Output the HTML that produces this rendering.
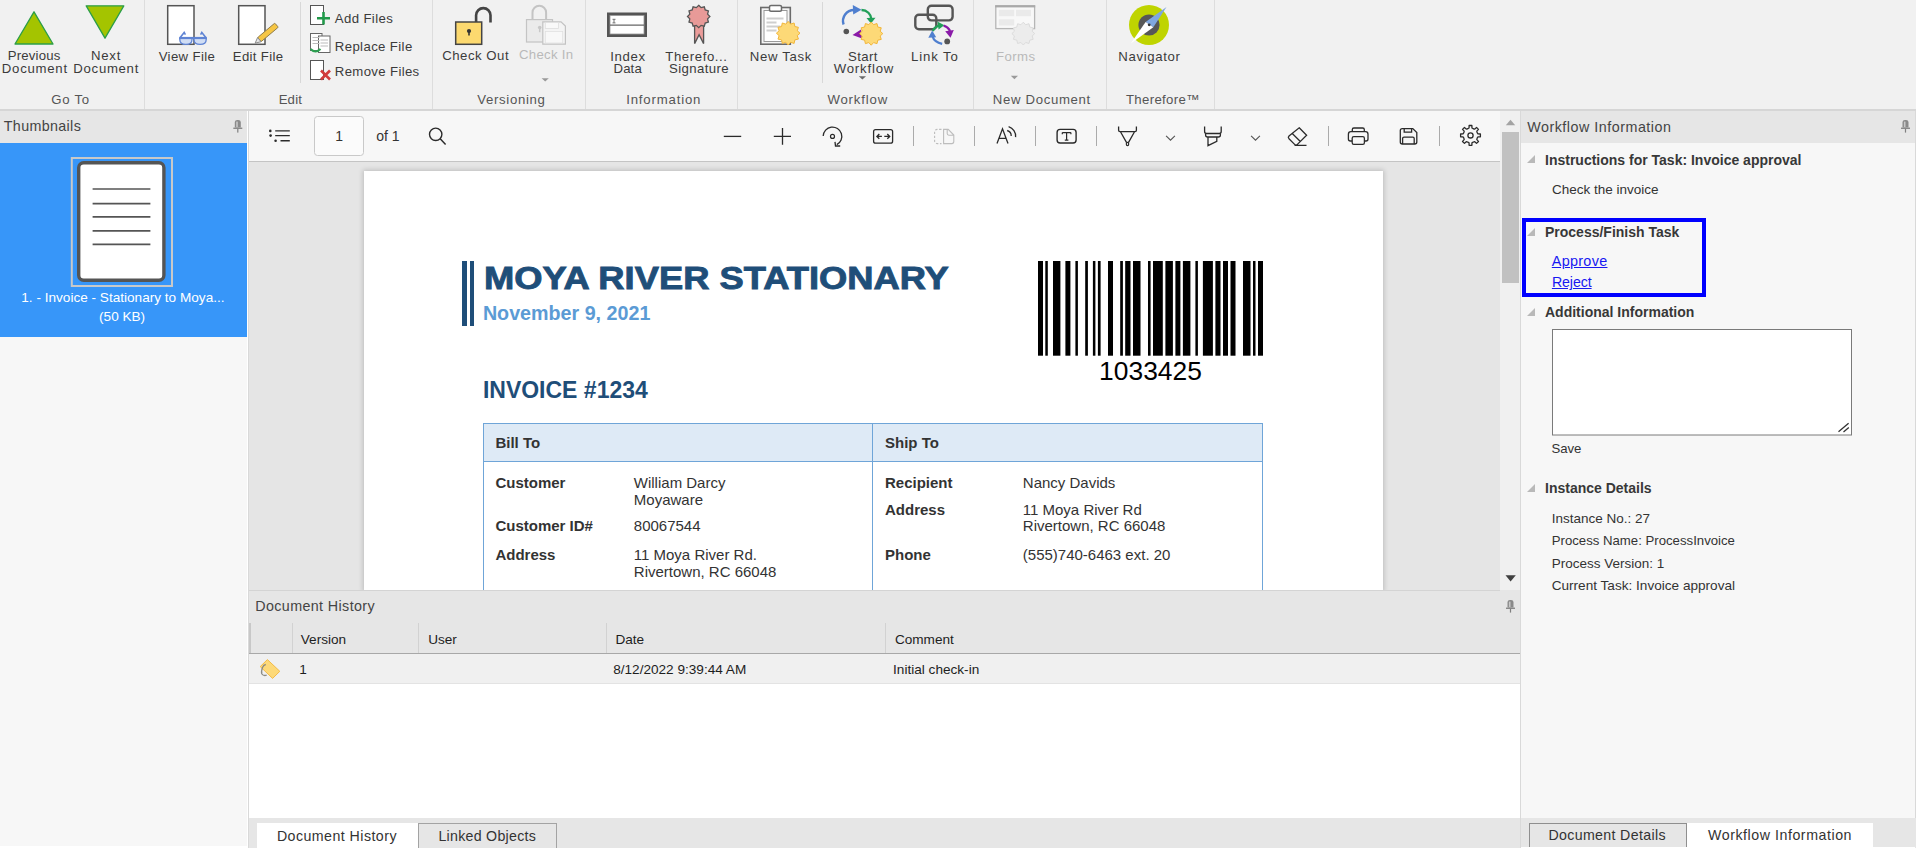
<!DOCTYPE html>
<html><head><meta charset="utf-8"><title>Therefore Viewer</title>
<style>
html,body{margin:0;padding:0;}
body{width:1916px;height:848px;overflow:hidden;position:relative;background:#f0f0f0;font-family:"Liberation Sans",sans-serif;}
.t{position:absolute;line-height:1;white-space:nowrap;}
.r{position:absolute;display:block;}
</style></head><body>
<div class="r" style="left:0px;top:0px;width:1916px;height:109px;background:#f1f1f1;"></div>
<div class="r" style="left:0px;top:109px;width:1916px;height:2px;background:#d6d6d6;"></div>
<div class="r" style="left:0px;top:111px;width:247px;height:737px;background:#f7f7f7;"></div>
<div class="r" style="left:0px;top:111px;width:247px;height:32px;background:#e6e6e6;"></div>
<div class="r" style="left:0px;top:143px;width:247px;height:194px;background:#3796f9;"></div>
<div class="r" style="left:247px;top:111px;width:1px;height:737px;background:#ffffff;"></div>
<div class="r" style="left:248px;top:111px;width:1px;height:737px;background:#d9d9d9;"></div>
<div class="r" style="left:249px;top:111px;width:1251px;height:50px;background:#f7f7f7;"></div>
<div class="r" style="left:249px;top:161px;width:1251px;height:1px;background:#c4c4c4;"></div>
<div class="r" style="left:249px;top:162px;width:1251px;height:428px;background:#e5e5e5;"></div>
<div class="r" style="left:1500px;top:111px;width:20px;height:479px;background:#f0f0f0;"></div>
<div class="r" style="left:1502px;top:132px;width:17px;height:151px;background:#c1c1c1;"></div>
<div class="r" style="left:1520px;top:111px;width:1px;height:737px;background:#d9d9d9;"></div>
<div class="r" style="left:1521px;top:111px;width:395px;height:707px;background:#f7f7f7;"></div>
<div class="r" style="left:1521px;top:111px;width:395px;height:32px;background:#e6e6e6;"></div>
<div class="r" style="left:1915px;top:111px;width:1px;height:737px;background:#d9d9d9;"></div>
<div class="r" style="left:1521px;top:818px;width:395px;height:30px;background:#e6e6e6;"></div>
<div class="r" style="left:249px;top:590px;width:1271px;height:258px;background:#ffffff;"></div>
<div class="r" style="left:249px;top:590px;width:1271px;height:63px;background:#e6e6e6;"></div>
<div class="r" style="left:249px;top:653px;width:1271px;height:1px;background:#a8a8a8;"></div>
<div class="r" style="left:249px;top:654px;width:1271px;height:29px;background:#f0f0f0;"></div>
<div class="r" style="left:249px;top:683px;width:1271px;height:1px;background:#e3e3e3;"></div>
<div class="r" style="left:249px;top:818px;width:1271px;height:30px;background:#e6e6e6;"></div>
<div class="r" style="left:144px;top:0px;width:1px;height:109px;background:#dddddd;"></div>
<div class="r" style="left:432px;top:0px;width:1px;height:109px;background:#dddddd;"></div>
<div class="r" style="left:585px;top:0px;width:1px;height:109px;background:#dddddd;"></div>
<div class="r" style="left:737px;top:0px;width:1px;height:109px;background:#dddddd;"></div>
<div class="r" style="left:973px;top:0px;width:1px;height:109px;background:#dddddd;"></div>
<div class="r" style="left:1106px;top:0px;width:1px;height:109px;background:#dddddd;"></div>
<div class="r" style="left:1214px;top:0px;width:1px;height:109px;background:#dddddd;"></div>
<div class="r" style="left:300px;top:2px;width:1px;height:81px;background:#d8d8d8;"></div>
<div class="r" style="left:822px;top:2px;width:1px;height:81px;background:#d8d8d8;"></div>
<svg class="r" style="left:0px;top:0px;" width="1916" height="109" viewBox="0 0 1916 109"><polygon points="15,44 53,44 34,11.8" fill="#a4c400" stroke="#2b9e48" stroke-width="1.3" stroke-linejoin="round"/><polygon points="86.2,5.8 123.8,5.8 105,38.2" fill="#a4c400" stroke="#2b9e48" stroke-width="1.3" stroke-linejoin="round"/><rect x="167.7" y="5.7" width="26.3" height="38.6" fill="#fff" stroke="#555" stroke-width="1.5"/><g fill="#d0ddf4" stroke="#5f84d4" stroke-width="1.3"><path d="M179.8,38.2 h12.2 v1.2 q0,5 -6.1,5 q-6.1,0 -6.1,-5z"/><path d="M194,38.2 h12.2 v1.2 q0,5 -6.1,5 q-6.1,0 -6.1,-5z"/></g><path d="M179.2,38 H206.8" stroke="#5f84d4" stroke-width="2.2"/><path d="M180.2,37.6 L184.2,32.4 L185.4,34.6 M205.8,37.6 L201.8,32.4 L200.6,34.6" fill="none" stroke="#5f84d4" stroke-width="1.6"/><rect x="238.7" y="5.7" width="26.3" height="38.6" fill="#fff" stroke="#555" stroke-width="1.5"/><g transform="translate(267,33.2) rotate(-40)"><rect x="-10" y="-2.7" width="22.5" height="5.4" rx="0.8" fill="#f6c644" stroke="#8c7a4a" stroke-width="0.9"/><polygon points="-10,-2.7 -15.5,0 -10,2.7" fill="#e6e6e6" stroke="#888" stroke-width="0.9"/></g><rect x="310.5" y="5.5" width="13" height="19" fill="#fff" stroke="#555" stroke-width="1"/><path d="M317,18.2 h13 M323.5,12 v12.5" stroke="#21994a" stroke-width="2.6"/><rect x="310.5" y="33.5" width="11.5" height="17" fill="#fff" stroke="#666" stroke-width="1"/><rect x="318.5" y="36" width="11.5" height="16.5" fill="#fff" stroke="#666" stroke-width="1"/><path d="M312.5,37.5h7 M312.5,40.5h7 M312.5,43.5h7 M320.5,40h7.5 M320.5,43h7.5 M320.5,46h7.5" stroke="#bbb" stroke-width="1.2"/><path d="M310.5,49 q5,5 10,0" fill="none" stroke="#2aa050" stroke-width="2"/><rect x="310.5" y="60.5" width="13" height="19" fill="#fff" stroke="#555" stroke-width="1"/><path d="M321,70.5 l9,9 M330,70.5 l-9,9" stroke="#d23a3a" stroke-width="2.6"/><path d="M476.1,22.5 V15.3 a7.2,7.2 0 0 1 14.4,0 V22.5" fill="none" stroke="#444" stroke-width="2.6"/><rect x="455.7" y="22" width="26" height="22.3" fill="#fcd96f" stroke="#444" stroke-width="1.5"/><circle cx="469" cy="31" r="2.1" fill="#333"/><path d="M469,31 v4.5" stroke="#333" stroke-width="1.6"/><path d="M532.5,19.8 V12.6 a6.8,6.8 0 0 1 13.6,0 V19.8" fill="none" stroke="#c4c4c4" stroke-width="2"/><rect x="526.5" y="19.6" width="26" height="22.4" fill="#ebebeb" stroke="#c4c4c4" stroke-width="1.2"/><circle cx="539.7" cy="27.6" r="1.8" fill="#c8c8c8"/><path d="M539.7,27.6 v4.6" stroke="#c8c8c8" stroke-width="1.5"/><path d="M542.8,21.8 h18.2 l4.4,4.2 v18.2 h-22.6z" fill="#f4f4f4" stroke="#c2c2c2" stroke-width="1.2"/><rect x="545.3" y="22.6" width="13.3" height="5.8" fill="#f9f9f9" stroke="#dedede" stroke-width="0.8"/><rect x="545.3" y="31.5" width="17.4" height="11.5" fill="#f8f8f8" stroke="#e0e0e0" stroke-width="0.8"/><polygon points="541.6,78.2 548.8000000000001,78.2 545.2,81.60000000000001" fill="#9a9a9a"/><polygon points="858.8,76.2 866.0,76.2 862.4,79.60000000000001" fill="#6a6a6a"/><polygon points="1010.8,75.8 1018.0,75.8 1014.4,79.2" fill="#9a9a9a"/><rect x="608.5" y="14" width="37" height="21.5" fill="#fff" stroke="#555" stroke-width="3"/><rect x="610" y="15.5" width="34" height="18.5" fill="none" stroke="#999" stroke-width="0.8"/><path d="M610,25.2 h34" stroke="#666" stroke-width="1.3"/><path d="M612.5,19.3h3 M614,19.3v3.6 M612.5,22.9h3" stroke="#666" stroke-width="0.9"/><path d="M694.6,24 v19.6 l4.5,-9 l4.5,9 v-19.6z" fill="#eb9c9a" stroke="#555" stroke-width="1.3" stroke-linejoin="miter"/><polygon points="698.70,5.30 701.08,7.61 704.30,6.80 705.21,9.99 708.40,10.90 707.59,14.12 709.90,16.50 707.59,18.88 708.40,22.10 705.21,23.01 704.30,26.20 701.08,25.39 698.70,27.70 696.32,25.39 693.10,26.20 692.19,23.01 689.00,22.10 689.81,18.88 687.50,16.50 689.81,14.12 689.00,10.90 692.19,9.99 693.10,6.80 696.32,7.61" fill="#e89a98" stroke="#555" stroke-width="1.3"/><rect x="760.8" y="7.5" width="29.5" height="36.7" fill="#f4f4f4" stroke="#6b6b6b" stroke-width="1.6"/><rect x="764" y="10.5" width="23" height="31" fill="#fff" stroke="#9a9a9a" stroke-width="1"/><rect x="769.5" y="5.6" width="12" height="5.6" rx="1.5" fill="#fff" stroke="#6b6b6b" stroke-width="1.5"/><path d="M766.5,18.5h17 M766.5,22.5h10 M766.5,26.5h14 M766.5,30.5h10" stroke="#cfcfcf" stroke-width="1.8"/><polygon points="788.20,21.40 790.63,24.12 794.10,22.98 794.85,26.55 798.42,27.30 797.28,30.77 800.00,33.20 797.28,35.63 798.42,39.10 794.85,39.85 794.10,43.42 790.63,42.28 788.20,45.00 785.77,42.28 782.30,43.42 781.55,39.85 777.98,39.10 779.12,35.63 776.40,33.20 779.12,30.77 777.98,27.30 781.55,26.55 782.30,22.98 785.77,24.12" fill="#fdd977" stroke="#f2b63a" stroke-width="1"/><path d="M843.6,24.5 a11,11 0 0 1 10.5,-14.5" fill="none" stroke="#4f7fcf" stroke-width="2.4"/><polygon points="852.8,5 861.5,9.8 853.2,14.5" fill="#4f7fcf"/><path d="M861.5,10 a10,10 0 0 1 10,9.5" fill="none" stroke="#22a058" stroke-width="2.4"/><polygon points="866.5,18 875.5,17.8 871,23.5" fill="#22a058"/><circle cx="846.3" cy="31.5" r="2.8" fill="#555"/><polygon points="852.5,35 861,29.5 862,38.5" fill="#8a1aa8"/><polygon points="871.20,22.00 873.61,24.62 877.00,23.55 877.78,27.02 881.25,27.80 880.18,31.19 882.80,33.60 880.18,36.01 881.25,39.40 877.78,40.18 877.00,43.65 873.61,42.58 871.20,45.20 868.79,42.58 865.40,43.65 864.62,40.18 861.15,39.40 862.22,36.01 859.60,33.60 862.22,31.19 861.15,27.80 864.62,27.02 865.40,23.55 868.79,24.62" fill="#fdd977" stroke="#f2b63a" stroke-width="1"/><rect x="915.3" y="14.7" width="21" height="14.6" rx="3.6" fill="none" stroke="#555" stroke-width="2.4"/><rect x="927.8" y="5.8" width="24.8" height="14.6" rx="3.6" fill="none" stroke="#555" stroke-width="2.4"/><path d="M932.8,31 q2,-4.5 7,-5.6" fill="none" stroke="#22a058" stroke-width="2.3"/><polygon points="937.4,21.6 944.3,25.2 938.6,29.6" fill="#22a058"/><path d="M943.6,25.6 q4.5,1.2 6.5,5.5" fill="none" stroke="#8a1aa8" stroke-width="2.3"/><polygon points="945.2,31.2 953.8,30 950.5,37.8" fill="#8a1aa8"/><path d="M932.6,36.5 q1.6,5.6 9.6,7.3" fill="none" stroke="#4f7fcf" stroke-width="2.3"/><polygon points="928.3,37.8 936.2,37.2 932.2,30.6" fill="#4f7fcf"/><circle cx="947.2" cy="41.4" r="2.9" fill="#555"/><rect x="995.8" y="6" width="38.8" height="22.6" fill="#f8f8f8" stroke="#b6b6b6" stroke-width="1.3"/><rect x="995.2" y="5.2" width="40" height="2.2" fill="#a9a9a9"/><path d="M998.8,9.7h15.4v6.5h-15.4z M1016,9.7h15v6.5h-15z M998.8,19.2h15.4v6.4h-15.4z" fill="#eaeaea"/><polygon points="1023.30,22.20 1025.68,24.71 1029.00,23.73 1029.81,27.09 1033.17,27.90 1032.19,31.22 1034.70,33.60 1032.19,35.98 1033.17,39.30 1029.81,40.11 1029.00,43.47 1025.68,42.49 1023.30,45.00 1020.92,42.49 1017.60,43.47 1016.79,40.11 1013.43,39.30 1014.41,35.98 1011.90,33.60 1014.41,31.22 1013.43,27.90 1016.79,27.09 1017.60,23.73 1020.92,24.71" fill="#ececec" stroke="#dcdcdc" stroke-width="1"/><circle cx="1149" cy="25" r="20" fill="#bfd400"/><circle cx="1149" cy="25" r="10.6" fill="#575757"/><polygon points="1166.5,7 1145.6,21.9 1153.3,27.2" fill="#7fa7e0"/><polygon points="1130.8,43.4 1145.6,21.9 1153.3,27.2" fill="#ffffff"/><circle cx="1149.2" cy="24.8" r="1.4" fill="#333"/></svg>
<div class="t" style="left:-266.1px;width:600px;text-align:center;top:48.8px;font-size:13.2px;color:#3b3b3b;font-weight:normal;letter-spacing:0.206px;padding-left:0.206px;">Previous</div>
<div class="t" style="left:-265.9px;width:600px;text-align:center;top:62.4px;font-size:13.2px;color:#3b3b3b;font-weight:normal;letter-spacing:0.734px;padding-left:0.734px;">Document</div>
<div class="t" style="left:-194.7px;width:600px;text-align:center;top:48.8px;font-size:13.2px;color:#3b3b3b;font-weight:normal;letter-spacing:0.753px;padding-left:0.753px;">Next</div>
<div class="t" style="left:-194.5px;width:600px;text-align:center;top:62.4px;font-size:13.2px;color:#3b3b3b;font-weight:normal;letter-spacing:0.691px;padding-left:0.691px;">Document</div>
<div class="t" style="left:-113.4px;width:600px;text-align:center;top:49.5px;font-size:13.2px;color:#3b3b3b;font-weight:normal;letter-spacing:0.374px;padding-left:0.374px;">View File</div>
<div class="t" style="left:-42.2px;width:600px;text-align:center;top:49.5px;font-size:13.2px;color:#3b3b3b;font-weight:normal;letter-spacing:0.327px;padding-left:0.327px;">Edit File</div>
<div class="t" style="left:175.2px;width:600px;text-align:center;top:49.2px;font-size:13.2px;color:#3b3b3b;font-weight:normal;letter-spacing:0.505px;padding-left:0.505px;">Check Out</div>
<div class="t" style="left:245.9px;width:600px;text-align:center;top:47.6px;font-size:13.2px;color:#b9b9b9;font-weight:normal;letter-spacing:0.301px;padding-left:0.301px;">Check In</div>
<div class="t" style="left:327.4px;width:600px;text-align:center;top:49.5px;font-size:13.2px;color:#3b3b3b;font-weight:normal;letter-spacing:0.602px;padding-left:0.602px;">Index</div>
<div class="t" style="left:327.6px;width:600px;text-align:center;top:62.4px;font-size:13.2px;color:#3b3b3b;font-weight:normal;letter-spacing:0.106px;padding-left:0.106px;">Data</div>
<div class="t" style="left:395.9px;width:600px;text-align:center;top:49.5px;font-size:13.2px;color:#3b3b3b;font-weight:normal;letter-spacing:0.578px;padding-left:0.578px;">Therefo...</div>
<div class="t" style="left:398.6px;width:600px;text-align:center;top:62.4px;font-size:13.2px;color:#3b3b3b;font-weight:normal;letter-spacing:0.399px;padding-left:0.399px;">Signature</div>
<div class="t" style="left:480.2px;width:600px;text-align:center;top:49.5px;font-size:13.2px;color:#3b3b3b;font-weight:normal;letter-spacing:0.646px;padding-left:0.646px;">New Task</div>
<div class="t" style="left:562.6px;width:600px;text-align:center;top:49.5px;font-size:13.2px;color:#3b3b3b;font-weight:normal;letter-spacing:0.356px;padding-left:0.356px;">Start</div>
<div class="t" style="left:563.1px;width:600px;text-align:center;top:62.4px;font-size:13.2px;color:#3b3b3b;font-weight:normal;letter-spacing:0.810px;padding-left:0.810px;">Workflow</div>
<div class="t" style="left:634.0px;width:600px;text-align:center;top:49.5px;font-size:13.2px;color:#3b3b3b;font-weight:normal;letter-spacing:0.852px;padding-left:0.852px;">Link To</div>
<div class="t" style="left:715.4px;width:600px;text-align:center;top:49.5px;font-size:13.2px;color:#b9b9b9;font-weight:normal;letter-spacing:0.426px;padding-left:0.426px;">Forms</div>
<div class="t" style="left:848.8px;width:600px;text-align:center;top:49.5px;font-size:13.2px;color:#3b3b3b;font-weight:normal;letter-spacing:0.638px;padding-left:0.638px;">Navigator</div>
<div class="t" style="left:334.8px;top:11.7px;font-size:13.2px;color:#3b3b3b;font-weight:normal;letter-spacing:0.372px;">Add Files</div>
<div class="t" style="left:334.8px;top:39.9px;font-size:13.2px;color:#3b3b3b;font-weight:normal;letter-spacing:0.376px;">Replace File</div>
<div class="t" style="left:334.8px;top:65.1px;font-size:13.2px;color:#3b3b3b;font-weight:normal;letter-spacing:0.346px;">Remove Files</div>
<div class="t" style="left:-230.2px;width:600px;text-align:center;top:92.9px;font-size:13.2px;color:#555555;font-weight:normal;letter-spacing:0.755px;padding-left:0.755px;">Go To</div>
<div class="t" style="left:-9.8px;width:600px;text-align:center;top:92.9px;font-size:13.2px;color:#555555;font-weight:normal;letter-spacing:0.185px;padding-left:0.185px;">Edit</div>
<div class="t" style="left:210.7px;width:600px;text-align:center;top:92.9px;font-size:13.2px;color:#555555;font-weight:normal;letter-spacing:0.684px;padding-left:0.684px;">Versioning</div>
<div class="t" style="left:362.9px;width:600px;text-align:center;top:92.9px;font-size:13.2px;color:#555555;font-weight:normal;letter-spacing:0.827px;padding-left:0.827px;">Information</div>
<div class="t" style="left:556.9px;width:600px;text-align:center;top:92.9px;font-size:13.2px;color:#555555;font-weight:normal;letter-spacing:0.824px;padding-left:0.824px;">Workflow</div>
<div class="t" style="left:741.2px;width:600px;text-align:center;top:92.9px;font-size:13.2px;color:#555555;font-weight:normal;letter-spacing:0.669px;padding-left:0.669px;">New Document</div>
<div class="t" style="left:862.5px;width:600px;text-align:center;top:92.9px;font-size:13.2px;color:#555555;font-weight:normal;letter-spacing:0.341px;padding-left:0.341px;">Therefore™</div>
<svg class="r" style="left:0px;top:0px;pointer-events:none;z-index:5" width="1916" height="848" viewBox="0 0 1916 848"><g fill="#2b2b2b"><circle cx="270.3" cy="130.9" r="1.3"/><circle cx="270.6" cy="135.6" r="1.3"/><circle cx="275.6" cy="140.7" r="1.3"/></g><path d="M275.2,130.9h14.6 M275.2,135.6h14.6 M280.5,140.7h9.3" stroke="#2b2b2b" stroke-width="1.4"/><rect x="314.5" y="116.5" width="49" height="39" rx="3" fill="#fbfbfb" stroke="#c9c9c9" stroke-width="1"/><circle cx="435.7" cy="134.3" r="6.2" fill="none" stroke="#2b2b2b" stroke-width="1.4"/><path d="M440.2,138.8 L445.6,144.4" stroke="#2b2b2b" stroke-width="1.5"/><path d="M913.5,126 V146" stroke="#ababab" stroke-width="1"/><path d="M974.5,126 V146" stroke="#ababab" stroke-width="1"/><path d="M1035.5,126 V146" stroke="#ababab" stroke-width="1"/><path d="M1096.5,126 V146" stroke="#ababab" stroke-width="1"/><path d="M1328.5,126 V146" stroke="#ababab" stroke-width="1"/><path d="M1439.5,126 V146" stroke="#ababab" stroke-width="1"/><path d="M723.8,136.4h17.4" stroke="#2b2b2b" stroke-width="1.3"/><path d="M773.8,136.4h17.2 M782.5,128v16.7" stroke="#2b2b2b" stroke-width="1.3"/><path d="M823.2,136 A9.3,9.3 0 1 1 836.8,144.6" fill="none" stroke="#2b2b2b" stroke-width="1.3"/><path d="M835,141.8 L835.5,146 L840.2,146" fill="none" stroke="#2b2b2b" stroke-width="1.3"/><circle cx="832.5" cy="136.4" r="2" fill="none" stroke="#2b2b2b" stroke-width="1.2"/><rect x="873.6" y="129.6" width="19" height="13.6" rx="2" fill="none" stroke="#2b2b2b" stroke-width="1.3"/><path d="M876.9,136.4h5 M884.3,136.4h5.2 M879.3,134 l-2.4,2.4 l2.4,2.4 M887.3,134 l2.4,2.4 l-2.4,2.4" fill="none" stroke="#2b2b2b" stroke-width="1.35"/><path d="M941.5,129.4 h-4.3 a2.6,2.6 0 0 0 -2.6,2.6 v9 a2.6,2.6 0 0 0 2.6,2.6 h4.3" fill="none" stroke="#bdbdbd" stroke-width="1.1" stroke-dasharray="2.4,1.6"/><path d="M943.6,143.6 V129.4 h4.6 l5.6,5.6 v6.6 a2,2 0 0 1 -2,2z M947.2,129.4 v4.2 a1.6,1.6 0 0 0 1.6,1.6 h5" fill="none" stroke="#bdbdbd" stroke-width="1.1"/><path d="M997,143.6 L1002.5,128.8 L1008,143.6 M999,138.4h7" fill="none" stroke="#2b2b2b" stroke-width="1.3"/><path d="M1008.6,126.6 a10,10 0 0 1 7,10.5 M1007.2,130.5 a5.5,5.5 0 0 1 4,5.5" fill="none" stroke="#2b2b2b" stroke-width="1.3"/><rect x="1057.1" y="129.4" width="19" height="13.6" rx="3" fill="none" stroke="#2b2b2b" stroke-width="1.4"/><path d="M1062.3,132.6 h8.6 M1062.3,132.6 v1.6 M1070.9,132.6 v1.6 M1066.6,132.6 v7.6 M1064.8,140.2 h3.6" fill="none" stroke="#2b2b2b" stroke-width="1.2"/><path d="M1118.6,126.6 v3.6 a1.4,1.4 0 0 0 1.4,1.4 h15 a1.4,1.4 0 0 0 1.4,-1.4 v-3.6 M1120.6,132 L1126.6,142.6 M1134.4,132 L1128.4,142.6" fill="none" stroke="#2b2b2b" stroke-width="1.3"/><ellipse cx="1127.5" cy="144" rx="1.2" ry="1.6" fill="none" stroke="#2b2b2b" stroke-width="1.2"/><path d="M1166.1,135.8 L1170.5,140.2 L1174.9,135.8" fill="none" stroke="#555" stroke-width="1.1"/><path d="M1251.1,135.8 L1255.5,140.2 L1259.9,135.8" fill="none" stroke="#555" stroke-width="1.1"/><path d="M1204.6,126.5 v5 a2,2 0 0 0 2,2 h12.6 a2,2 0 0 0 2,-2 v-5" fill="none" stroke="#2b2b2b" stroke-width="1.3"/><path d="M1205.6,133.4 v1.6 a2,2 0 0 0 2,2 h10.8 a2,2 0 0 0 2,-2 v-1.6 M1208,137.2 v8.4 l8.8,-4.2 v-4.2" fill="none" stroke="#2b2b2b" stroke-width="1.3"/><path d="M1299.2,127.8 L1306.6,135.2 L1297.4,144.4 a2,2 0 0 1 -2.8,0 L1289,138.8 a2,2 0 0 1 0,-2.8z M1292.5,133.8 L1300.6,141.8 M1294.5,145.4 h12" fill="none" stroke="#2b2b2b" stroke-width="1.3"/><path d="M1352.3,132 v-2.4 a1.6,1.6 0 0 1 1.6,-1.6 h8.8 a1.6,1.6 0 0 1 1.6,1.6 v2.4" fill="none" stroke="#2b2b2b" stroke-width="1.3"/><path d="M1352,141 h-1.6 a2,2 0 0 1 -2,-2 v-4.8 a2.5,2.5 0 0 1 2.5,-2.5 h14.6 a2.5,2.5 0 0 1 2.5,2.5 v4.8 a2,2 0 0 1 -2,2 h-1.6" fill="none" stroke="#2b2b2b" stroke-width="1.3"/><rect x="1352.2" y="136.6" width="12.2" height="7.8" rx="1.6" fill="none" stroke="#2b2b2b" stroke-width="1.3"/><path d="M1402.3,128.6 h10.5 l4,4 v9.4 a2,2 0 0 1 -2,2 h-12.5 a2,2 0 0 1 -2,-2 v-11.4 a2,2 0 0 1 2,-2z" fill="none" stroke="#2b2b2b" stroke-width="1.3"/><path d="M1404.2,128.6 v3.6 h7.4 v-3.6 M1402.6,144 v-5.4 a1.4,1.4 0 0 1 1.4,-1.4 h8.8 a1.4,1.4 0 0 1 1.4,1.4 v5.4" fill="none" stroke="#2b2b2b" stroke-width="1.3"/><polygon points="1467.74,128.75 1469.05,127.94 1469.11,125.50 1471.89,125.50 1471.95,127.94 1473.26,128.75 1474.75,129.10 1476.52,127.41 1478.49,129.38 1476.80,131.15 1477.15,132.64 1477.96,133.95 1480.40,134.01 1480.40,136.79 1477.96,136.85 1477.15,138.16 1476.80,139.65 1478.49,141.42 1476.52,143.39 1474.75,141.70 1473.26,142.05 1471.95,142.86 1471.89,145.30 1469.11,145.30 1469.05,142.86 1467.74,142.05 1466.25,141.70 1464.48,143.39 1462.51,141.42 1464.20,139.65 1463.85,138.16 1463.04,136.85 1460.60,136.79 1460.60,134.01 1463.04,133.95 1463.85,132.64 1464.20,131.15 1462.51,129.38 1464.48,127.41 1466.25,129.10" fill="none" stroke="#2b2b2b" stroke-width="1.3" stroke-linejoin="round"/><circle cx="1470.5" cy="135.4" r="2.6" fill="none" stroke="#2b2b2b" stroke-width="1.3"/><polygon points="1505.8,125.2 1515.2,125.2 1510.5,119.8" fill="#a3a3a3"/><polygon points="1505.5,575.2 1515.8,575.2 1510.6,581.4" fill="#404040"/></svg>
<div class="t" style="left:335.2px;top:129.2px;font-size:14px;color:#333;font-weight:normal;z-index:6;">1</div>
<div class="t" style="left:376.2px;top:129.1px;font-size:14px;color:#333;font-weight:normal;">of 1</div>
<div class="t" style="left:3.8px;top:118.7px;font-size:14.3px;color:#444;font-weight:normal;letter-spacing:0.342px;">Thumbnails</div>
<svg class="r" style="left:0px;top:0px;" width="250" height="848" viewBox="0 0 250 848"><path d="M234.8,127.6 V122 a2.5,2.2 0 0 1 2.5,-2 h1 a2.5,2.2 0 0 1 2.5,2 V127.6z" fill="#8a8a8a"/><rect x="236.20000000000002" y="121.6" width="1.6" height="5.4" fill="#c8c8c8"/><rect x="233.3" y="127.6" width="9" height="1.3" fill="#808080"/><rect x="237.20000000000002" y="128.9" width="1.2" height="3.7" fill="#808080"/><rect x="71.8" y="158" width="100.2" height="128" fill="none" stroke="#c9c9c9" stroke-width="2"/><rect x="78.7" y="162.7" width="85.2" height="117.6" rx="5" fill="#fff" stroke="#555" stroke-width="3.4"/><path d="M92.6,189h57.8 M92.6,203.6h57.8 M92.6,216.9h57.8 M92.6,230.9h57.8 M92.6,244.4h57.8" stroke="#555" stroke-width="1.6"/></svg>
<div class="t" style="left:-177.1px;width:600px;text-align:center;top:290.5px;font-size:13.6px;color:#ffffff;font-weight:normal;">1. - Invoice - Stationary to Moya...</div>
<div class="t" style="left:-177.9px;width:600px;text-align:center;top:309.9px;font-size:13.6px;color:#ffffff;font-weight:normal;">(50 KB)</div>
<div class="r" style="left:364px;top:170.6px;width:1019px;height:420px;background:#ffffff;box-shadow:0 0 5px 1px rgba(0,0,0,0.18);"></div>
<div class="r" style="left:462px;top:260.5px;width:4.6px;height:65.5px;background:#1f4e79;"></div>
<div class="r" style="left:469.5px;top:260.5px;width:4.6px;height:65.5px;background:#1f4e79;"></div>
<div class="t" style="left:483.8px;top:261.8px;font-size:32px;color:#1f4e79;font-weight:bold;transform:scaleX(1.135);transform-origin:0 0;-webkit-text-stroke:0.9px #1f4e79;">MOYA RIVER STATIONARY</div>
<div class="t" style="left:482.9px;top:304.4px;font-size:19.7px;color:#5b9bd5;font-weight:bold;">November 9, 2021</div>
<div class="t" style="left:482.9px;top:379.2px;font-size:23px;color:#1f4e79;font-weight:bold;">INVOICE #1234</div>
<svg class="r" style="left:1030px;top:255px;" width="240" height="110" viewBox="0 0 240 110"><rect x="8.00" y="6" width="5.00" height="94.7" fill="#000"/><rect x="15.30" y="6" width="2.50" height="94.7" fill="#000"/><rect x="23.00" y="6" width="7.40" height="94.7" fill="#000"/><rect x="35.40" y="6" width="5.00" height="94.7" fill="#000"/><rect x="45.40" y="6" width="2.50" height="94.7" fill="#000"/><rect x="55.20" y="6" width="2.70" height="94.7" fill="#000"/><rect x="62.90" y="6" width="2.50" height="94.7" fill="#000"/><rect x="67.90" y="6" width="2.70" height="94.7" fill="#000"/><rect x="78.00" y="6" width="5.00" height="94.7" fill="#000"/><rect x="90.20" y="6" width="2.70" height="94.7" fill="#000"/><rect x="95.20" y="6" width="5.30" height="94.7" fill="#000"/><rect x="103.00" y="6" width="7.50" height="94.7" fill="#000"/><rect x="118.00" y="6" width="2.60" height="94.7" fill="#000"/><rect x="123.00" y="6" width="9.80" height="94.7" fill="#000"/><rect x="135.40" y="6" width="7.50" height="94.7" fill="#000"/><rect x="145.40" y="6" width="5.00" height="94.7" fill="#000"/><rect x="152.90" y="6" width="7.50" height="94.7" fill="#000"/><rect x="165.40" y="6" width="2.50" height="94.7" fill="#000"/><rect x="172.90" y="6" width="10.00" height="94.7" fill="#000"/><rect x="185.40" y="6" width="5.10" height="94.7" fill="#000"/><rect x="193.00" y="6" width="5.00" height="94.7" fill="#000"/><rect x="200.50" y="6" width="5.00" height="94.7" fill="#000"/><rect x="213.00" y="6" width="7.50" height="94.7" fill="#000"/><rect x="223.00" y="6" width="2.50" height="94.7" fill="#000"/><rect x="228.00" y="6" width="5.00" height="94.7" fill="#000"/></svg>
<div class="t" style="left:1099.1px;top:357.8px;font-size:26.4px;color:#000;font-weight:normal;">1033425</div>
<div class="r" style="left:483px;top:423px;width:780px;height:168px;background:#ffffff;box-sizing:border-box;border:1px solid #6fa5d8;border-bottom:none;"></div>
<div class="r" style="left:484px;top:424px;width:778px;height:36.5px;background:#deeaf6;"></div>
<div class="r" style="left:484px;top:460.5px;width:778px;height:1.2px;background:#6fa5d8;"></div>
<div class="r" style="left:872px;top:424px;width:1.2px;height:167px;background:#6fa5d8;"></div>
<div class="t" style="left:495.4px;top:435.2px;font-size:15px;color:#333333;font-weight:bold;">Bill To</div>
<div class="t" style="left:885.0px;top:435.2px;font-size:15px;color:#333333;font-weight:bold;">Ship To</div>
<div class="t" style="left:495.4px;top:474.7px;font-size:15px;color:#333333;font-weight:bold;">Customer</div>
<div class="t" style="left:495.4px;top:518.4px;font-size:15px;color:#333333;font-weight:bold;">Customer ID#</div>
<div class="t" style="left:495.4px;top:547.0px;font-size:15px;color:#333333;font-weight:bold;">Address</div>
<div class="t" style="left:885.0px;top:474.7px;font-size:15px;color:#333333;font-weight:bold;">Recipient</div>
<div class="t" style="left:885.0px;top:501.7px;font-size:15px;color:#333333;font-weight:bold;">Address</div>
<div class="t" style="left:885.0px;top:547.0px;font-size:15px;color:#333333;font-weight:bold;">Phone</div>
<div class="t" style="left:633.8px;top:474.7px;font-size:15px;color:#333333;font-weight:normal;">William Darcy</div>
<div class="t" style="left:633.8px;top:491.8px;font-size:15px;color:#333333;font-weight:normal;">Moyaware</div>
<div class="t" style="left:633.8px;top:518.4px;font-size:15px;color:#333333;font-weight:normal;">80067544</div>
<div class="t" style="left:633.8px;top:547.0px;font-size:15px;color:#333333;font-weight:normal;">11 Moya River Rd.</div>
<div class="t" style="left:633.8px;top:564.0px;font-size:15px;color:#333333;font-weight:normal;">Rivertown, RC 66048</div>
<div class="t" style="left:1022.8px;top:474.7px;font-size:15px;color:#333333;font-weight:normal;">Nancy Davids</div>
<div class="t" style="left:1022.8px;top:501.7px;font-size:15px;color:#333333;font-weight:normal;">11 Moya River Rd</div>
<div class="t" style="left:1022.8px;top:518.4px;font-size:15px;color:#333333;font-weight:normal;">Rivertown, RC 66048</div>
<div class="t" style="left:1022.8px;top:547.0px;font-size:15px;color:#333333;font-weight:normal;">(555)740-6463 ext. 20</div>
<div class="r" style="left:249px;top:590px;width:1251px;height:258px;background:#ffffff;z-index:2"></div>
<div class="r" style="left:249px;top:590px;width:1271px;height:63px;background:#e6e6e6;z-index:2"></div>
<div class="r" style="left:249px;top:653px;width:1271px;height:1px;background:#a8a8a8;z-index:2"></div>
<div class="r" style="left:249px;top:590px;width:1251px;height:1px;background:#d4d4d4;z-index:2"></div>
<div class="r" style="left:249px;top:654px;width:1271px;height:29px;background:#f0f0f0;z-index:2"></div>
<div class="r" style="left:249px;top:683px;width:1271px;height:1px;background:#e3e3e3;z-index:2"></div>
<div class="r" style="left:249px;top:818px;width:1271px;height:30px;background:#e6e6e6;z-index:2"></div>
<div class="r" style="left:292px;top:623px;width:1px;height:30px;background:#d2d2d2;z-index:3"></div>
<div class="r" style="left:418px;top:623px;width:1px;height:30px;background:#d2d2d2;z-index:3"></div>
<div class="r" style="left:606px;top:623px;width:1px;height:30px;background:#d2d2d2;z-index:3"></div>
<div class="r" style="left:885px;top:623px;width:1px;height:30px;background:#d2d2d2;z-index:3"></div>
<div class="r" style="left:249px;top:623px;width:1.5px;height:30px;background:#c8c8c8;z-index:3"></div>
<div style="position:absolute;left:0;top:0;z-index:4">
<div class="t" style="left:255.2px;top:599.1px;font-size:14.3px;color:#444;font-weight:normal;letter-spacing:0.391px;">Document History</div>
<div class="t" style="left:300.8px;top:632.7px;font-size:13.6px;color:#1e1e1e;font-weight:normal;">Version</div>
<div class="t" style="left:428.2px;top:632.7px;font-size:13.6px;color:#1e1e1e;font-weight:normal;">User</div>
<div class="t" style="left:615.4px;top:632.7px;font-size:13.6px;color:#1e1e1e;font-weight:normal;">Date</div>
<div class="t" style="left:894.9px;top:632.7px;font-size:13.6px;color:#1e1e1e;font-weight:normal;">Comment</div>
<div class="t" style="left:299.3px;top:663.2px;font-size:13.6px;color:#1e1e1e;font-weight:normal;">1</div>
<div class="t" style="left:613.2px;top:663.2px;font-size:13.6px;color:#1e1e1e;font-weight:normal;">8/12/2022 9:39:44 AM</div>
<div class="t" style="left:893.1px;top:663.2px;font-size:13.6px;color:#1e1e1e;font-weight:normal;">Initial check-in</div>
<div class="r" style="left:257px;top:823px;width:161px;height:25px;background:#ffffff;"></div>
<div class="r" style="left:418px;top:823px;width:139px;height:25px;background:#e6e6e6;box-sizing:border-box;border:1px solid #a3a3a3;border-bottom:none;"></div>
<div class="t" style="left:276.9px;top:829.0px;font-size:14.2px;color:#333;font-weight:normal;letter-spacing:0.457px;">Document History</div>
<div class="t" style="left:438.4px;top:829.0px;font-size:14.2px;color:#333;font-weight:normal;letter-spacing:0.282px;">Linked Objects</div>
<svg class="r" style="left:0px;top:0px;" width="1916" height="848" viewBox="0 0 1916 848"><path d="M1507.5,607.6 V602 a2.5,2.2 0 0 1 2.5,-2 h1 a2.5,2.2 0 0 1 2.5,2 V607.6z" fill="#8a8a8a"/><rect x="1508.9" y="601.6" width="1.6" height="5.4" fill="#c8c8c8"/><rect x="1506" y="607.6" width="9" height="1.3" fill="#808080"/><rect x="1509.9" y="608.9" width="1.2" height="3.7" fill="#808080"/><polygon points="267.4,659.6 279.8,671.3 272.6,678.4 260.2,666.6" fill="#fdd978" stroke="#f3bb48" stroke-width="1" stroke-linejoin="round"/><path d="M265.8,664.5 q-2.2,0.2 -3.3,3 q-1.6,4.5 -0.6,6.5 q1.5,2.2 4.8,1.2" fill="none" stroke="#8a8a84" stroke-width="1.3"/></svg>
</div>
<div class="t" style="left:1527.2px;top:119.5px;font-size:14.3px;color:#444;font-weight:normal;letter-spacing:0.513px;">Workflow Information</div>
<svg class="r" style="left:0px;top:0px;" width="1916" height="848" viewBox="0 0 1916 848"><path d="M1902.5,127.6 V122 a2.5,2.2 0 0 1 2.5,-2 h1 a2.5,2.2 0 0 1 2.5,2 V127.6z" fill="#8a8a8a"/><rect x="1903.9" y="121.6" width="1.6" height="5.4" fill="#c8c8c8"/><rect x="1901" y="127.6" width="9" height="1.3" fill="#808080"/><rect x="1904.9" y="128.9" width="1.2" height="3.7" fill="#808080"/><polygon points="1527,163 1535,163 1535,155" fill="#b9b9b9"/><polygon points="1527,236 1535,236 1535,228" fill="#b9b9b9"/><polygon points="1527,316 1535,316 1535,308" fill="#b9b9b9"/><polygon points="1527,492 1535,492 1535,484" fill="#b9b9b9"/><rect x="1524" y="220" width="180" height="75" fill="none" stroke="#0000ff" stroke-width="4"/><rect x="1552.5" y="329.5" width="299" height="105.5" fill="#fff" stroke="#7a7a7a" stroke-width="1"/><path d="M1838.5,431.8 L1848.6,423.2 M1843.5,432 L1848.8,427.6" stroke="#333" stroke-width="1.3"/></svg>
<div class="t" style="left:1545.0px;top:152.7px;font-size:14px;color:#383838;font-weight:bold;">Instructions for Task: Invoice approval</div>
<div class="t" style="left:1545.0px;top:225.2px;font-size:14px;color:#383838;font-weight:bold;">Process/Finish Task</div>
<div class="t" style="left:1545.0px;top:304.8px;font-size:14px;color:#383838;font-weight:bold;">Additional Information</div>
<div class="t" style="left:1545.0px;top:481.2px;font-size:14px;color:#383838;font-weight:bold;">Instance Details</div>
<div class="t" style="left:1551.9px;top:182.5px;font-size:13.5px;color:#333333;font-weight:normal;">Check the invoice</div>
<div class="t" style="left:1551.8px;top:254.3px;font-size:14.4px;color:#1818f2;font-weight:normal;letter-spacing:0.294px;text-decoration:underline;">Approve</div>
<div class="t" style="left:1551.9px;top:275.1px;font-size:14.2px;color:#1818f2;font-weight:normal;letter-spacing:-0.090px;text-decoration:underline;">Reject</div>
<div class="t" style="left:1551.4px;top:442.0px;font-size:13.2px;color:#333333;font-weight:normal;">Save</div>
<div class="t" style="left:1551.7px;top:512.2px;font-size:13.5px;color:#333333;font-weight:normal;">Instance No.: 27</div>
<div class="t" style="left:1551.7px;top:534.3px;font-size:13.2px;color:#333333;font-weight:normal;">Process Name: ProcessInvoice</div>
<div class="t" style="left:1551.7px;top:556.8px;font-size:13.5px;color:#333333;font-weight:normal;">Process Version: 1</div>
<div class="t" style="left:1551.7px;top:578.8px;font-size:13.6px;color:#333333;font-weight:normal;">Current Task: Invoice approval</div>
<div class="r" style="left:1529px;top:823px;width:158px;height:25px;background:#e6e6e6;box-sizing:border-box;border:1px solid #8f8f8f;border-bottom:none;"></div>
<div class="r" style="left:1687px;top:823px;width:186px;height:25px;background:#ffffff;"></div>
<div class="t" style="left:1548.4px;top:827.7px;font-size:14.2px;color:#333;font-weight:normal;letter-spacing:0.342px;">Document Details</div>
<div class="t" style="left:1708.0px;top:827.7px;font-size:14.2px;color:#333;font-weight:normal;letter-spacing:0.552px;">Workflow Information</div>
<div class="r" style="left:0px;top:846px;width:247px;height:2px;background:#ffffff;z-index:3"></div>
<div class="r" style="left:1521px;top:847px;width:394px;height:1px;background:#ffffff;z-index:3"></div>
</body></html>
